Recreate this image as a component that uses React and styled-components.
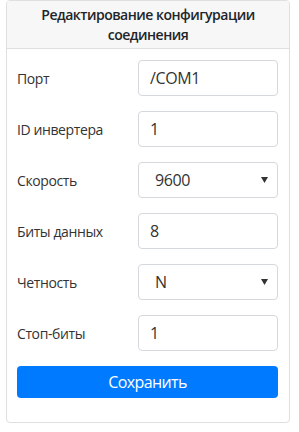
import React from 'react'
import styled, { createGlobalStyle } from 'styled-components'

const GlobalStyle = createGlobalStyle`
  body {
    margin: 0;
    background: #fff;
    font-family: "Open Sans", "Noto Sans", sans-serif;
    color: #212529;
  }
`

const Page = styled.div`
  padding: 0 9px 8px 6px;
`

const Card = styled.div`
  border: 1px solid #dfdfdf;
  border-radius: 4px;
  background: #fff;
  overflow: hidden;
`

const Header = styled.div`
  background: #f7f7f7;
  border-bottom: 1px solid #dfdfdf;
  padding: 4px 10px 3px;
  text-align: center;
  font-weight: 600;
  font-size: 14px;
  line-height: 20px;
  letter-spacing: -0.5px;
  color: #212529;
`

const Body = styled.div`
  padding: 11px 11px 24px 10px;
  display: flex;
  flex-direction: column;
  gap: 15px;
`

const Row = styled.div`
  display: grid;
  grid-template-columns: 121px 1fr;
  align-items: center;
`

const Label = styled.label`
  font-size: 14px;
  letter-spacing: -0.4px;
  color: #333;
`

const Input = styled.input`
  box-sizing: border-box;
  width: 100%;
  height: 36px;
  border: 1px solid #d5d8dc;
  border-radius: 4px;
  padding: 0 11px;
  font-family: inherit;
  font-size: 16px;
  letter-spacing: -0.4px;
  color: #333;
  outline: none;
`

const SelectBox = styled.div`
  box-sizing: border-box;
  height: 36px;
  border: 1px solid #d5d8dc;
  border-radius: 4px;
  padding: 0 9px 0 16px;
  display: flex;
  align-items: center;
  justify-content: space-between;
  font-size: 16px;
  letter-spacing: -0.4px;
  color: #333;
`

const Arrow = styled.svg`
  width: 7px;
  height: 6px;
  fill: #333;
`

const SaveButton = styled.button`
  height: 32px;
  border: none;
  border-radius: 4px;
  background: #007bff;
  color: #fff;
  font-family: inherit;
  font-size: 16px;
  letter-spacing: -0.6px;
  cursor: pointer;
`

const fields = [
  { label: 'Порт', value: '/COM1' },
  { label: 'ID инвертера', value: '1' },
  { label: 'Скорость', value: '9600', select: true },
  { label: 'Биты данных', value: '8' },
  { label: 'Четность', value: 'N', select: true },
  { label: 'Стоп-биты', value: '1' },
]

const App = () => {
  return (
    <Page>
      <GlobalStyle />
      <Card>
        <Header>Редактирование конфигурации соединения</Header>
        <Body>
          {fields.map((f) => (
            <Row key={f.label}>
              <Label>{f.label}</Label>
              {f.select ? (
                <SelectBox>
                  <span>{f.value}</span>
                  <Arrow viewBox="0 0 7 6">
                    <path d="M0 0 H7 L3.5 6 Z" />
                  </Arrow>
                </SelectBox>
              ) : (
                <Input defaultValue={f.value} />
              )}
            </Row>
          ))}
          <SaveButton>Сохранить</SaveButton>
        </Body>
      </Card>
    </Page>
  )
}

export default App
